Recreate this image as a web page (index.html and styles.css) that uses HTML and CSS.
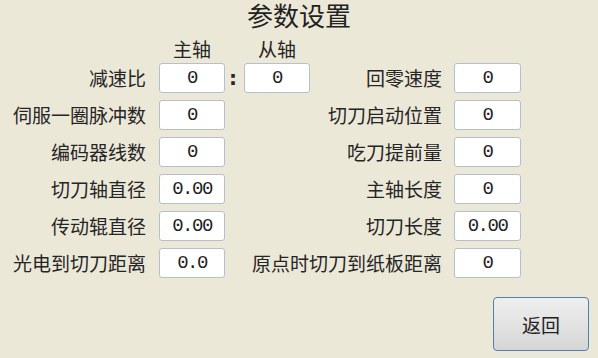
FILE: index.html
```html
<!DOCTYPE html>
<html lang="zh-CN">
<head>
<meta charset="utf-8">
<title>参数设置</title>
<link rel="stylesheet" href="styles.css">
</head>
<body>
<div class="page">
  <h1 class="title">参数设置</h1>
  <div class="hdr-row">
    <span class="hdr">主轴</span>
    <span class="hdr">从轴</span>
  </div>
  <div class="rows">
    <div class="row">
      <span class="lbl">减速比</span>
      <span class="val">0</span>
      <span class="colon">:</span>
      <span class="val">0</span>
      <span class="lbl-r">回零速度</span>
      <span class="val">0</span>
    </div>
    <div class="row">
      <span class="lbl">伺服一圈脉冲数</span>
      <span class="val">0</span>
      <span class="lbl-r">切刀启动位置</span>
      <span class="val">0</span>
    </div>
    <div class="row">
      <span class="lbl">编码器线数</span>
      <span class="val">0</span>
      <span class="lbl-r">吃刀提前量</span>
      <span class="val">0</span>
    </div>
    <div class="row">
      <span class="lbl">切刀轴直径</span>
      <span class="val">0.00</span>
      <span class="lbl-r">主轴长度</span>
      <span class="val">0</span>
    </div>
    <div class="row">
      <span class="lbl">传动辊直径</span>
      <span class="val">0.00</span>
      <span class="lbl-r">切刀长度</span>
      <span class="val">0.00</span>
    </div>
    <div class="row">
      <span class="lbl">光电到切刀距离</span>
      <span class="val">0.0</span>
      <span class="lbl-r">原点时切刀到纸板距离</span>
      <span class="val">0</span>
    </div>
  </div>
  <div class="footer">
    <button class="btn">返回</button>
  </div>
</div>
</body>
</html>
```
FILE: styles.css
```css
html, body {
  margin: 0;
  padding: 0;
  background: #ece8d8;
}
body {
  width: 598px;
  height: 358px;
  overflow: hidden;
  font-family: "Noto Sans CJK SC", "Noto Sans", sans-serif;
  color: #252525;
}
.page {
  display: flex;
  flex-direction: column;
}
.title {
  margin: 0;
  height: 30px;
  line-height: 30px;
  font-size: 26px;
  font-weight: normal;
  text-align: center;
  color: #222;
}
.hdr-row {
  display: flex;
  gap: 19px;
  padding-left: 159px;
  margin-top: 8px;
  height: 22px;
}
.hdr {
  width: 66px;
  font-size: 19px;
  line-height: 22px;
  text-align: center;
}
.rows {
  margin-top: 3px;
  display: flex;
  flex-direction: column;
  gap: 7px;
  padding-right: 77px;
}
.row {
  display: flex;
  align-items: center;
  height: 30px;
}
.lbl {
  width: 146px;
  margin-right: 13px;
  font-size: 19px;
  line-height: 30px;
  text-align: right;
  white-space: nowrap;
}
.lbl-r {
  flex: 1;
  margin-right: 12px;
  font-size: 19px;
  line-height: 30px;
  text-align: right;
  white-space: nowrap;
}
.val {
  box-sizing: border-box;
  width: 66px;
  height: 30px;
  background: #fff;
  border: 1px solid #b3c0cf;
  border-radius: 3px;
  font-family: "Liberation Mono", monospace;
  font-size: 19px;
  letter-spacing: -1.5px;
  line-height: 28px;
  text-align: center;
  color: #222;
}
.lbl-r + .val {
  width: 67px;
}
.colon {
  width: 19px;
  box-sizing: border-box;
  padding-right: 3px;
  font-family: "DejaVu Sans", sans-serif;
  font-size: 20px;
  font-weight: bold;
  line-height: 30px;
  text-align: center;
}
.footer {
  display: flex;
  justify-content: flex-end;
  padding-right: 9px;
  margin-top: 19px;
}
.btn {
  width: 96px;
  height: 54px;
  border: 1px solid #4f7fb3;
  border-radius: 4px;
  background: linear-gradient(#efefef, #d6d6d6);
  font-family: "Noto Sans CJK SC", sans-serif;
  font-size: 19px;
  color: #222;
  padding: 0;
}
```
